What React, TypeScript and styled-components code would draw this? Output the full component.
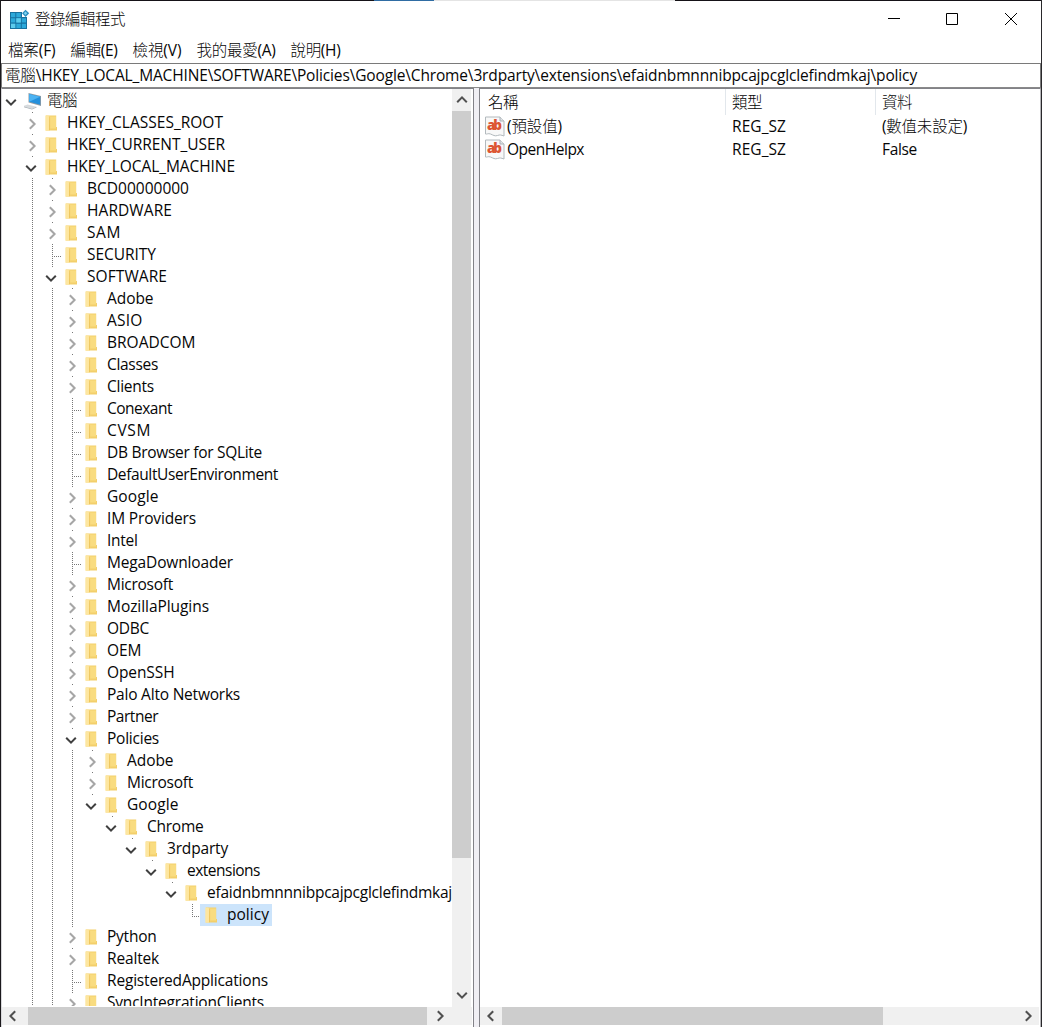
import React, { useLayoutEffect, useRef } from 'react';
import styled, { createGlobalStyle, css } from 'styled-components';

const Global = createGlobalStyle`
  * { box-sizing: border-box; }
  html, body { margin: 0; background: #fff; overflow: hidden; }
  body { font: 15.5px/22px "Open Sans", "Noto Sans CJK TC Light", "Noto Sans CJK TC", sans-serif; color: #060606; }
`;

const Window = styled.div`
  width: 1042px;
  height: 1027px;
  display: flex;
  flex-direction: column;
  background: #fff;
  border-left: 1px solid #1b191c;
  border-right: 1px solid #29282b;
  overflow: hidden;
`;

const TopEdge = styled.div`
  height: 1px;
  flex: none;
  margin: 0 -1px;
  background: linear-gradient(to right, #151217 374px, #2f6ca3 374px 434px, #e4e4e4 434px 675px, #151217 675px);
`;

const TitleBar = styled.header`
  height: 36px;
  flex: none;
  display: flex;
  align-items: center;
  padding-left: 8px;
`;

const Title = styled.div`
  margin-left: 5px;
  padding-bottom: 1px;
  flex: 1;
`;

const Caption = styled.button<{ $w?: number }>`
  all: unset;
  width: ${(p) => p.$w ?? 58}px;
  height: 36px;
  display: grid;
  place-items: center;
`;

const MenuBar = styled.nav`
  height: 26px;
  flex: none;
  display: flex;
  align-items: center;
  gap: 15px;
  padding: 0 0 1px 7px;
`;

const PathBar = styled.div`
  height: 25px;
  flex: none;
  border: 1px solid #7a7a7a;
  border-bottom-color: #8a8a8a;
  padding: 0 0 0 3px;
  display: flex;
`;

const Panes = styled.main`
  flex: 1;
  min-height: 0;
  display: flex;
  background: #f0eff4;
`;

const Pane = styled.section<{ $w?: number }>`
  ${(p) => (p.$w ? css`width: ${p.$w}px; flex: none;` : css`flex: 1;`)}
  display: flex;
  flex-direction: column;
  background: #fff;
  border: solid #828288;
  border-width: 1px 1px 0 1px;
  min-width: 0;
`;

const TreePane = styled(Pane)`
  border-left-color: #d9d9dc;
`;

const ListPane = styled(Pane)`
  margin-left: 5px;
  border-right-color: #b5b5b8;
`;

const Upper = styled.div`
  flex: 1;
  min-height: 0;
  display: flex;
  padding-right: 2px;
`;

const Tree = styled.div`
  flex: 1;
  min-width: 0;
  overflow: hidden;
  height: 917px;
  padding-top: 1px;
`;

const Row = styled.div`
  display: flex;
  height: 22px;
`;

const dotsV = css`background: repeating-linear-gradient(to bottom, #777 0 1px, transparent 1px 2px) 10px 0 / 1px 100% no-repeat;`;

const Guide = styled.div<{ $on: boolean }>`
  width: 20px;
  height: 22px;
  flex: none;
  ${(p) => p.$on && dotsV}
`;

const Branch = styled.div<{ $leaf?: boolean; $last?: boolean; $root?: boolean }>`
  width: 20px;
  height: 22px;
  flex: none;
  background-repeat: no-repeat;
  ${(p) =>
    p.$leaf
      ? css`
          background-image: repeating-linear-gradient(to bottom, #777 0 1px, transparent 1px 2px),
            repeating-linear-gradient(to right, #777 0 1px, transparent 1px 2px);
          background-position: 10px 0, 10px 12px;
          background-size: 1px ${p.$last ? '12px' : '22px'}, 9px 1px;
        `
      : !p.$root &&
        css`
          background-image: linear-gradient(#777, #777);
          background-position: 10px 0;
          background-size: 1px 1px;
        `}
`;

const Item = styled.div<{ $selected?: boolean }>`
  display: flex;
  align-items: center;
  height: 22px;
  padding: 0 3px 0 3px;
  margin-left: -2px;
  white-space: nowrap;
  background: ${(p) => (p.$selected ? '#cce4fb' : 'transparent')};
`;

const IconSlot = styled.div<{ $root?: boolean }>`
  width: 24px;
  height: 22px;
  flex: none;
  padding: ${(p) => (p.$root ? '2px 0 0 1px' : '3px 0 0 2px')};
`;

const TreeText = styled.div`
  height: 22px;
  margin-bottom: 2px;
`;

const TextBox = styled.span`
  display: inline-block;
  white-space: pre;
`;

const VBar = styled.div`
  width: 19px;
  flex: none;
  display: flex;
  flex-direction: column;
  justify-content: space-between;
  background: #f0f0f0;
`;

const HBar = styled.div`
  height: 18px;
  flex: none;
  display: flex;
  margin: 0 1px 2px 0;
  background: #f0f0f0;
`;

const Arrow = styled.div<{ $w: number; $h: number; $pad?: number }>`
  width: ${(p) => p.$w}px;
  height: ${(p) => p.$h}px;
  flex: none;
  display: grid;
  place-items: center;
  padding-right: ${(p) => p.$pad ?? 0}px;
`;

const Thumb = styled.div<{ $w?: number; $h?: number }>`
  width: ${(p) => (p.$w ? `${p.$w}px` : '100%')};
  height: ${(p) => (p.$h ? `${p.$h}px` : '100%')};
  flex: none;
  background: #cdcdcd;
`;

const Spacer = styled.div`
  flex: 1;
`;

const Table = styled.div`
  flex: 1;
  display: grid;
  grid-template-columns: 246px 150px 1fr;
  grid-template-rows: 26px 23px 23px;
  align-content: start;
`;

const Head = styled.div<{ $first?: boolean; $line?: boolean }>`
  border-right: ${(p) => (p.$line ? '1px solid #e2e7ec' : '0')};
  padding: 2px 0 0 ${(p) => (p.$first ? 8 : 6)}px;
`;

const Cell = styled.div<{ $first?: boolean }>`
  display: flex;
  align-items: center;
  gap: 2px;
  padding-left: ${(p) => (p.$first ? 5 : 6)}px;
`;

const CellText = styled.div`
  margin-bottom: 1px;
`;

/** Text whose tracking is tuned at run time so that it spans the given width. */
function Fit({ children, w }: { children: string; w: number }) {
  const ref = useRef<HTMLSpanElement>(null);
  useLayoutEffect(() => {
    const el = ref.current;
    if (!el) return;
    el.style.letterSpacing = '0px';
    const natural = el.getBoundingClientRect().width;
    el.style.letterSpacing = `${(w - natural) / children.length}px`;
  }, [children, w]);
  return <TextBox ref={ref}>{children}</TextBox>;
}

type Dir = 'up' | 'down' | 'left' | 'right';
const chevrons: Record<Dir, string> = {
  right: 'M3.8 1.2 8.6 6 3.8 10.8',
  left: 'M8.2 1.2 3.4 6 8.2 10.8',
  down: 'M1.2 3.8 6 8.6 10.8 3.8',
  up: 'M1.2 8.2 6 3.4 10.8 8.2',
};

const Chevron = ({ dir, color = '#505050', sw = 2 }: { dir: Dir; color?: string; sw?: number }) => (
  <svg width="12" height="12" viewBox="0 0 12 12">
    <path d={chevrons[dir]} fill="none" stroke={color} strokeWidth={sw} />
  </svg>
);

const Twist = styled.div<{ $open: boolean }>`
  padding: ${(p) => (p.$open ? '6px 0 0 3px' : '6px 0 0 4px')};
  height: 22px;
  line-height: 0;
`;

const Folder = () => (
  <svg width="13" height="17" viewBox="0 0 13 17" display="block">
    <path d="M1 .5h10.2v11.5H12V15.5H1z" fill="#f3cf6b" />
    <path d="M4.5 1.5H11v12H4.5z" fill="#f9dc80" />
    <path d="M.3.5h2.9l2 2.2v11.5L4 15.7H.3z" fill="#fde6a0" />
    <path d="M4.2 1.7 5.2 2.5v11.7L4 15.7z" fill="#efc65c" />
  </svg>
);

const Computer = () => (
  <svg width="19" height="18" viewBox="0 0 19 18" display="block">
    <path d="M4.5 1 17 4v10L4.5 10.5z" fill="#8f9ba4" />
    <path d="M5.2 2 16.2 4.7v8L5.2 9.8z" fill="#2490dc" />
    <path d="M5.2 2 16.2 4.7 5.2 9.8z" fill="#4cb3f2" />
    <path d="M-1 14.2 3.5 12.5l9 2.2-4.5 2z" fill="#d7dbde" />
    <path d="M-1 14.2v.7l9 2.6 4.5-2v-.8l-4.5 2z" fill="#a5adb2" />
  </svg>
);

const RegLogo = () => (
  <svg width="21" height="21" viewBox="0 0 21 21" display="block">
    <path d="M1 3h12v5h5v12H1z" fill="#17719f" />
    <path d="M2 4h4.3v4.3H2zM7.3 4h4.5v4.3H7.3zM2 9.3h4.3v4.3H2zM7.3 9.3h4.5v4.3H7.3zM12.8 9.3h4.2v4.3h-4.2zM2 14.7h4.3V19H2zM7.3 14.7h4.5V19H7.3zM12.8 14.7h4.2V19h-4.2z" fill="#2ca9da" />
    <path d="M7.3 9.3h4.5v4.3H7.3zM2 14.7h4.3V19H2z" fill="#5ccbec" />
    <path d="m16.5.8 3.7 3.5-3.6 3.6L13 4.3z" fill="#2a8fc0" />
    <path d="m16.5 2.6 1.7 1.7-1.7 1.7-1.7-1.7z" fill="#7fd3ef" />
  </svg>
);

const AbIcon = () => (
  <svg width="20" height="22" viewBox="0 0 20 22" display="block">
    <path d="M.5 1H15l4 4v15c-3-1-4-1.5-6.5-.5S8 19 5.5 18 2 18.500.5 18z" fill="#f8f8f8" stroke="#b2b9bd" />
    <path d="M15 1v4h4" fill="#dfe3e6" stroke="#aab2b8" />
    <text x="2" y="13.5" fontFamily="Open Sans, sans-serif" fontWeight="800" fontSize="13.5" fill="#dc5533" textLength="15">ab</text>
  </svg>
);

type Kind = 'open' | 'closed' | 'leaf';
interface Entry {
  name: string;
  depth: number;
  kind: Kind;
  w: number;
}

const e = (depth: number, kind: Kind, name: string, w: number): Entry => ({ depth, kind, name, w });

const entries: Entry[] = [
  e(0, 'open', '電腦', 30),
  e(1, 'closed', 'HKEY_CLASSES_ROOT', 156),
  e(1, 'closed', 'HKEY_CURRENT_USER', 158),
  e(1, 'open', 'HKEY_LOCAL_MACHINE', 168),
  e(2, 'closed', 'BCD00000000', 102),
  e(2, 'closed', 'HARDWARE', 85),
  e(2, 'closed', 'SAM', 34),
  e(2, 'leaf', 'SECURITY', 69),
  e(2, 'open', 'SOFTWARE', 80),
  e(3, 'closed', 'Adobe', 46.5),
  e(3, 'closed', 'ASIO', 35.5),
  e(3, 'closed', 'BROADCOM', 88.5),
  e(3, 'closed', 'Classes', 51),
  e(3, 'closed', 'Clients', 47),
  e(3, 'leaf', 'Conexant', 65),
  e(3, 'leaf', 'CVSM', 44),
  e(3, 'leaf', 'DB Browser for SQLite', 155),
  e(3, 'leaf', 'DefaultUserEnvironment', 171),
  e(3, 'closed', 'Google', 51.5),
  e(3, 'closed', 'IM Providers', 89),
  e(3, 'closed', 'Intel', 30.5),
  e(3, 'leaf', 'MegaDownloader', 126),
  e(3, 'closed', 'Microsoft', 66),
  e(3, 'closed', 'MozillaPlugins', 102),
  e(3, 'closed', 'ODBC', 42),
  e(3, 'closed', 'OEM', 34.5),
  e(3, 'closed', 'OpenSSH', 67.5),
  e(3, 'closed', 'Palo Alto Networks', 133),
  e(3, 'closed', 'Partner', 51),
  e(3, 'open', 'Policies', 52),
  e(4, 'closed', 'Adobe', 46.5),
  e(4, 'closed', 'Microsoft', 66),
  e(4, 'open', 'Google', 51.5),
  e(5, 'open', 'Chrome', 56.5),
  e(6, 'open', '3rdparty', 61),
  e(7, 'open', 'extensions', 73),
  e(8, 'open', 'efaidnbmnnnibpcajpcglclefindmkaj', 245),
  e(9, 'leaf', 'policy', 42),
  e(3, 'closed', 'Python', 49.5),
  e(3, 'closed', 'Realtek', 52),
  e(3, 'leaf', 'RegisteredApplications', 161),
  e(3, 'closed', 'SyncIntegrationClients', 157),
];

/** A guide runs through a row while a later sibling is still to come; the two outer levels go on below the view. */
const continues = (index: number, depth: number) => {
  if (depth === 0) return false;
  if (depth < 3) return true;
  for (let i = index + 1; i < entries.length; i++) {
    if (entries[i].depth < depth) return false;
    if (entries[i].depth === depth) return true;
  }
  return false;
};

const TreeRow = ({ item, index }: { item: Entry; index: number }) => {
  const { depth, kind, name, w } = item;
  const root = depth === 0;
  return (
    <Row>
      {Array.from({ length: depth }, (_, d) => (
        <Guide key={d} $on={continues(index, d)} />
      ))}
      <Branch $leaf={kind === 'leaf'} $last={!continues(index, depth)} $root={root}>
        {kind !== 'leaf' && (
          <Twist $open={kind === 'open'}>
            <Chevron dir={kind === 'open' ? 'down' : 'right'} color={kind === 'open' ? '#404040' : '#a6a6a6'} />
          </Twist>
        )}
      </Branch>
      <Item $selected={name === 'policy'}>
        <IconSlot $root={root}>{root ? <Computer /> : <Folder />}</IconSlot>
        <TreeText><Fit w={w}>{name}</Fit></TreeText>
      </Item>
    </Row>
  );
};

const menus: [string, number][] = [
  ['檔案(F)', 47.5],
  ['編輯(E)', 47],
  ['檢視(V)', 49],
  ['我的最愛(A)', 79],
  ['說明(H)', 50],
];

const values: [string, number, string, number][] = [
  ['(預設值)', 55, '(數值未設定)', 85],
  ['OpenHelpx', 77, 'False', 35],
];

export default function App() {
  return (
    <Window>
      <Global />
      <TopEdge />
      <TitleBar>
        <RegLogo />
        <Title><Fit w={90}>登錄編輯程式</Fit></Title>
        <Caption><svg width="12" height="12"><path d="M0 5.5h12" stroke="#000" /></svg></Caption>
        <Caption><svg width="12" height="12"><path d="M.5.5h11v11H.5z" fill="none" stroke="#000" /></svg></Caption>
        <Caption $w={60}><svg width="12" height="12"><path d="m0 0 12 12M12 0 0 12" stroke="#000" /></svg></Caption>
      </TitleBar>
      <MenuBar>
        {menus.map(([t, w]) => <Fit key={t} w={w}>{t}</Fit>)}
      </MenuBar>
      <PathBar>
        <Fit w={912}>{'電腦\\HKEY_LOCAL_MACHINE\\SOFTWARE\\Policies\\Google\\Chrome\\3rdparty\\extensions\\efaidnbmnnnibpcajpcglclefindmkaj\\policy'}</Fit>
      </PathBar>
      <Panes>
        <TreePane $w={473}>
          <Upper>
            <Tree>
              {entries.map((item, i) => <TreeRow key={i} item={item} index={i} />)}
            </Tree>
            <VBar>
              <Arrow $w={19} $h={22}><Chevron dir="up" /></Arrow>
              <Thumb $h={747} />
              <Spacer />
              <Arrow $w={19} $h={24}><Chevron dir="down" /></Arrow>
            </VBar>
          </Upper>
          <HBar>
            <Arrow $w={26} $h={18} $pad={4}><Chevron dir="left" /></Arrow>
            <Thumb $w={399} />
            <Arrow $w={26} $h={18}><Chevron dir="right" /></Arrow>
          </HBar>
        </TreePane>
        <ListPane>
          <Table>
            <Head $first $line><Fit w={30}>名稱</Fit></Head>
            <Head $line><Fit w={30}>類型</Fit></Head>
            <Head><Fit w={30}>資料</Fit></Head>
            {values.map(([name, nw, data, dw]) => (
              <React.Fragment key={name}>
                <Cell $first><AbIcon /><CellText><Fit w={nw}>{name}</Fit></CellText></Cell>
                <Cell><CellText><Fit w={54}>REG_SZ</Fit></CellText></Cell>
                <Cell><CellText><Fit w={dw}>{data}</Fit></CellText></Cell>
              </React.Fragment>
            ))}
          </Table>
          <HBar>
            <Arrow $w={22} $h={18} $pad={1}><Chevron dir="left" /></Arrow>
            <Thumb $w={381} />
            <Spacer />
            <Arrow $w={22} $h={18} $pad={1}><Chevron dir="right" /></Arrow>
          </HBar>
        </ListPane>
      </Panes>
    </Window>
  );
}
